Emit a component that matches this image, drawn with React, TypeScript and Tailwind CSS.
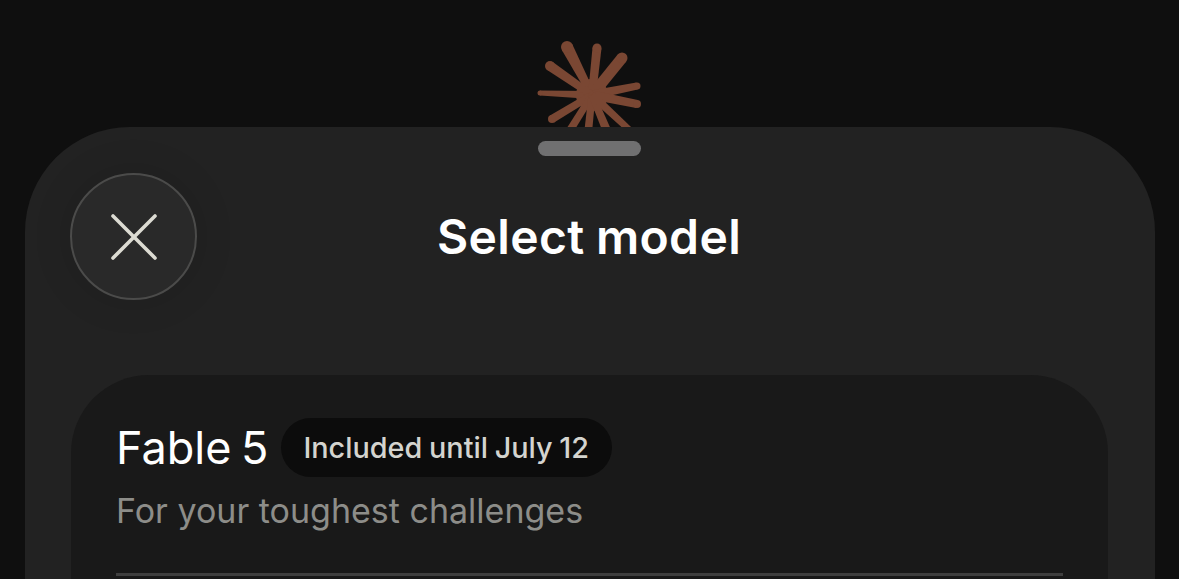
const cx = 592;
const cy = 95;

// tip x/y in page pixels, tip = width at the end, base = width at the hub
const spokes = [
  { x: 567, y: 47, tip: 12, base: 7 },
  { x: 597, y: 48, tip: 9, base: 8 },
  { x: 622, y: 58, tip: 11, base: 11 },
  { x: 637, y: 86, tip: 7, base: 9 },
  { x: 637, y: 104, tip: 8, base: 9 },
  { x: 540, y: 93, tip: 5, base: 8 },
  { x: 550, y: 66, tip: 10, base: 7 },
  { x: 552, y: 119, tip: 8, base: 7 },
  { x: 562, y: 143, tip: 8, base: 7 },
  { x: 587, y: 143, tip: 8, base: 7 },
  { x: 612, y: 143, tip: 9, base: 7 },
  { x: 636, y: 136, tip: 6, base: 8 },
];

function spokePoints(s: { x: number; y: number; tip: number; base: number }) {
  const dx = s.x - cx;
  const dy = s.y - cy;
  const len = Math.hypot(dx, dy);
  const nx = -dy / len;
  const ny = dx / len;
  return [
    [cx + (nx * s.base) / 2, cy + (ny * s.base) / 2],
    [s.x + (nx * s.tip) / 2, s.y + (ny * s.tip) / 2],
    [s.x - (nx * s.tip) / 2, s.y - (ny * s.tip) / 2],
    [cx - (nx * s.base) / 2, cy - (ny * s.base) / 2],
  ]
    .map((p) => p.join(","))
    .join(" ");
}

function Logo() {
  // coordinates are page pixels, viewBox starts at the logo box corner
  return (
    <svg width="110" height="110" viewBox="535 40 110 110" className="block">
      <circle cx={cx} cy={cy} r="16" fill="#7a4733" />
      {spokes.map((s, i) => (
        <g key={i} fill="#7a4733">
          <polygon points={spokePoints(s)} />
          <circle cx={s.x} cy={s.y} r={s.tip / 2} />
        </g>
      ))}
    </svg>
  );
}

export default function App() {
  return (
    <main className="h-[579px] overflow-hidden bg-[#0f0f0f] font-['Inter',sans-serif]">
      <div className="h-[127px] pt-[40px] flex justify-center">
        <Logo />
      </div>

      <section className="relative ml-[25px] mr-[24px] h-[600px] rounded-t-[105px] bg-[#222222]">
        <div className="pt-[14px] pr-[2px] flex justify-center">
          <div className="w-[103px] h-[15px] rounded-full bg-[#707071]" />
        </div>

        <header className="mt-[17px] px-[45px] grid grid-cols-[1fr_auto_1fr] items-center">
          <button className="w-[127px] h-[127px] rounded-full border-2 border-[#4b4b4a] bg-[#292929] shadow-[0_0_40px_rgba(0,0,0,0.12)] flex items-center justify-center">
            <svg width="46" height="46" viewBox="0 0 46 46" fill="none">
              <path
                d="M2 2L44 44M44 2L2 44"
                stroke="#dcdbd2"
                strokeWidth="3.6"
                strokeLinecap="round"
              />
            </svg>
          </button>
          <h1 className="text-[48px] leading-none font-semibold text-white tracking-[0.35px] [word-spacing:-1px] pr-[2px]">
            Select model
          </h1>
          <div />
        </header>

        <div className="mt-[75px] ml-[46px] mr-[47px] h-[400px] rounded-[78px] bg-[#191919] px-[45px] pt-[43px]">
          <div className="flex items-center gap-[13px] h-[59px]">
            <span className="text-[45px] leading-none text-white [word-spacing:-3px]">Fable 5</span>
            <span className="h-[59px] pl-[22px] pr-[23px] rounded-full bg-[#0c0c0c] flex items-center text-[28.8px] font-medium text-[#d4d4cf] [word-spacing:-1px]">
              Included until July 12
            </span>
          </div>
          <p className="mt-[12px] text-[34px] leading-[44px] text-[#8d8d89]">For your toughest challenges</p>
          <div className="mt-[40px] h-[3px] bg-[#3f3f3f]" />
        </div>
      </section>
    </main>
  );
}
